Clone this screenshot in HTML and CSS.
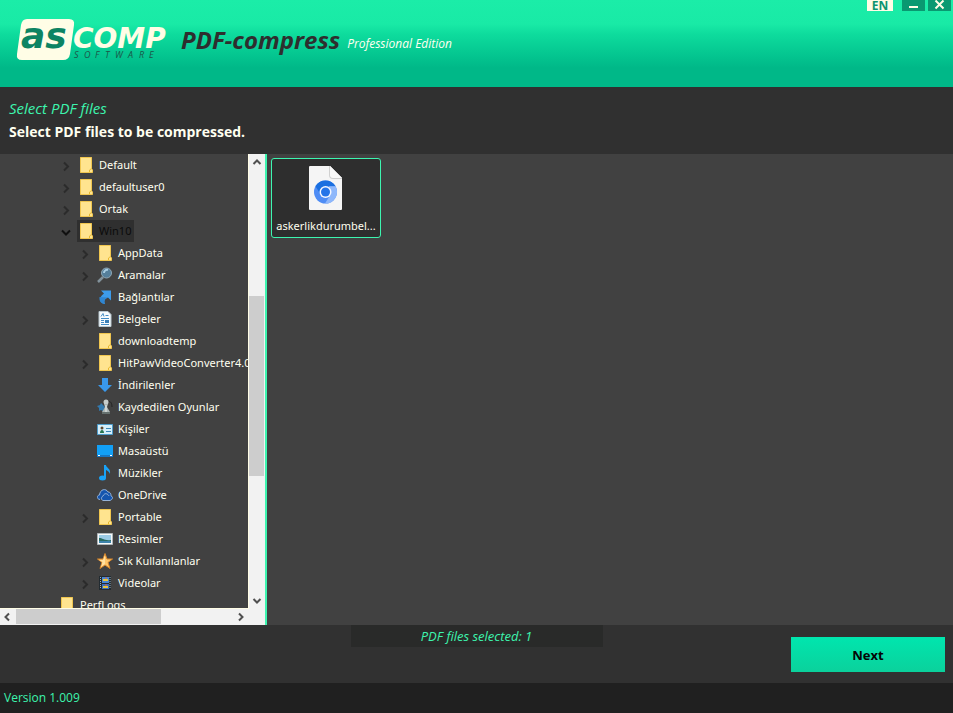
FILE: index.html
```html
<!DOCTYPE html>
<html lang="en">
<head>
<meta charset="utf-8">
<title>PDF-compress</title>
<link rel="stylesheet" href="styles.css">
</head>
<body>
<svg class="defs" aria-hidden="true">
  <symbol id="right" viewBox="0 0 16 16"><path d="M6 4.500l4 4-4 4" fill="none" stroke="currentColor" stroke-width="2"/></symbol>
  <symbol id="down" viewBox="0 0 16 16"><path d="M4 6.500l4 4 4-4" fill="none" stroke="currentColor" stroke-width="2"/></symbol>
  <symbol id="folder" viewBox="0 0 16 16"><path d="M2 .5h12v12h.5v3H2z" fill="#ffe48f"/><path d="M2.500 .5h11v11.500l1 1v2.500h-12z" fill="none" stroke="#f0c64f"/><path d="M11.500 15v-2l2-1.500" fill="none" stroke="#e8b92f"/></symbol>
  <symbol id="search" viewBox="0 0 16 16"><path d="M1 15l5-5" stroke="#83929b" stroke-width="2.500"/><circle cx="9.500" cy="6" r="5" fill="#557f9b" stroke="#8fa7b5"/><path d="M7 6a3 3 0 0 1 4-3" fill="none" stroke="#a9cde2" stroke-width="2"/></symbol>
  <symbol id="link" viewBox="0 0 16 16"><path d="M4 1.500h10v10l-3-3c-3 1-4.500 3-3 6.500-5-1-7.500-6-1-10.500z" fill="#3d9bea"/><path d="M2.500 8c-.5 4 1.500 7 5.500 7-1.500-3 0-5.500 3-6.500z" fill="#2f86d2"/></symbol>
  <symbol id="doc" viewBox="0 0 16 16"><path d="M2 .5h9l3 3v12H2z" fill="#f7fbfd" stroke="#b9c8d0"/><path d="M4 5.500l2-3 1 3M8.500 4.500h3M4 7.500h8M4 9.500h3M4 11.500h3M4 13.500h8" fill="none" stroke="#438cc5"/><path d="M8 9h4v3H8z" fill="#397eb6"/></symbol>
  <symbol id="download" viewBox="0 0 16 16"><path d="M5 1h6v7h4l-7 7-7-7h4z" fill="#3998ec"/></symbol>
  <symbol id="game" viewBox="0 0 16 16"><path d="M10 3c4-2 5 2 5 5" fill="none" stroke="#222"/><path d="M0 7l3-1 1-2 2 2 2 2-2 4-2-1-2 1 0-3z" fill="#327ab0"/><circle cx="9" cy="3" r="2.500" fill="#c6cdcc"/><path d="M7 5h4l-1 3 3 5v2H5v-2l3-5z" fill="#adb7b7"/><path d="M9 6v7" stroke="#edf0ef"/><path d="M5 14h8" stroke="#65706e" stroke-width="2"/></symbol>
  <symbol id="contact" viewBox="0 0 16 16"><path d="M.5 3.500h15v10H.5z" fill="#d6effa" stroke="#4e9cca"/><circle cx="5" cy="7" r="1.500" fill="#60482e"/><path d="M3 12c0-4 4-4 4 0z" fill="#277650"/><path d="M9 7.500h5M9 10.500h5" stroke="#3c88b7"/></symbol>
  <symbol id="desktop" viewBox="0 0 16 16"><path d="M0 2h16v12H0z" fill="#12a0f6"/><path d="M0 12h16v2H0z" fill="#1677c3"/><path d="M1 12.500h2M13 12.500h2" stroke="#fff"/></symbol>
  <symbol id="music" viewBox="0 0 16 16"><ellipse cx="5.500" cy="13" rx="3.500" ry="2.500" fill="#18a3f8"/><path d="M7 0h2c0 3 5 3 4 9-1-3-4-4-4-4v8H7z" fill="#18a3f8"/></symbol>
  <symbol id="cloud" viewBox="0 0 16 16"><path d="M3 12.500C-1 12 0 8 2.500 8 3 2 9 1 11 5c3 0 3 3 3 4 3 1 1 4-1 4.500H6C4 13 4 10 6 9c2-4 5-2 6 0" fill="#1455ae" stroke="#96b3d8"/></symbol>
  <symbol id="photo" viewBox="0 0 16 16"><path d="M.5 2.500h15v11H.5z" fill="#f7f9f9" stroke="#aeb5b8"/><path d="M2 4h12v8H2z" fill="#9bcbe6"/><path d="M2 7c4 0 5 3 12 2v1H2z" fill="#286b62"/><path d="M2 10h12v2H2z" fill="#3d83ac"/></symbol>
  <symbol id="star" viewBox="0 0 16 16"><path d="M8 .5l2 5.500h5.500L11 9.500l2 6L8 12l-5 3.500 2-6L.5 6H6z" fill="#ffc66b" stroke="#d8862b"/><path d="M8 2v9l-4 3 1.500-5L2 7h4z" fill="#ffe0a0"/></symbol>
  <symbol id="video" viewBox="0 0 16 16"><path d="M2 1h12v14H2z" fill="#222b31"/><path d="M5 2h7v6H5z" fill="#4687d4"/><path d="M5 9h7v5H5z" fill="#386fba"/><path d="M6 5h5M6 12h5" stroke="#e4c640" stroke-width="2"/><path d="M8 3h2M8 10h2" stroke="#db6147"/><path d="M3.500 2v12M13 2v12" stroke="#9bb0bd" stroke-dasharray="1 1"/></symbol>
</svg>

<div class="app">
  <header class="banner">
    <svg class="logo" viewBox="0 0 160 44" role="img" aria-label="ASCOMP Software">
      <path d="M11 1h42q6 0 5 6l-4 29q-1 6-7 6H6q-6 0-5-6L5 7q1-6 6-6z" fill="#fffde6"/>
      <text x="5" y="30" class="logo-as">as</text>
      <text x="57" y="30" class="logo-comp">COMP</text>
      <text y="40" class="logo-soft"><tspan x="58">S</tspan><tspan x="68">O</tspan><tspan x="79">F</tspan><tspan x="89">T</tspan><tspan x="99">W</tspan><tspan x="112">A</tspan><tspan x="123">R</tspan><tspan x="133">E</tspan></text>
    </svg>
    <h1 class="product">PDF-compress</h1>
    <span class="edition">Professional Edition</span>
    <div class="window-buttons">
      <button class="lang">EN</button>
      <button class="win" aria-label="Minimize"><svg viewBox="0 0 23 11"><path d="M7 7h9" stroke="#fffde6" stroke-width="2"/></svg></button>
      <button class="win close" aria-label="Close"><svg viewBox="0 0 23 11"><path d="M7.500 .5l8 8M15.500 .5l-8 8" stroke="#fffde6" stroke-width="2"/></svg></button>
    </div>
  </header>

  <section class="intro">
    <h2>Select PDF files</h2>
    <p>Select PDF files to be compressed.</p>
  </section>

  <main class="browser">
    <nav class="side" aria-label="Folders">
      <div class="tree-area">
        <ul class="tree">
          <li class="level1"><svg class="arrow"><use href="#right"/></svg><span class="node"><svg><use href="#folder"/></svg>Default</span></li>
          <li class="level1"><svg class="arrow"><use href="#right"/></svg><span class="node"><svg><use href="#folder"/></svg>defaultuser0</span></li>
          <li class="level1"><svg class="arrow"><use href="#right"/></svg><span class="node"><svg><use href="#folder"/></svg>Ortak</span></li>
          <li class="level1"><svg class="arrow open"><use href="#down"/></svg><span class="node selected"><svg><use href="#folder"/></svg>Win10</span></li>
          <li class="level2"><svg class="arrow"><use href="#right"/></svg><span class="node"><svg><use href="#folder"/></svg>AppData</span></li>
          <li class="level2"><svg class="arrow"><use href="#right"/></svg><span class="node"><svg><use href="#search"/></svg>Aramalar</span></li>
          <li class="level2"><span class="arrow"></span><span class="node"><svg><use href="#link"/></svg>Bağlantılar</span></li>
          <li class="level2"><svg class="arrow"><use href="#right"/></svg><span class="node"><svg><use href="#doc"/></svg>Belgeler</span></li>
          <li class="level2"><span class="arrow"></span><span class="node"><svg><use href="#folder"/></svg>downloadtemp</span></li>
          <li class="level2"><svg class="arrow"><use href="#right"/></svg><span class="node"><svg><use href="#folder"/></svg>HitPawVideoConverter4.0</span></li>
          <li class="level2"><span class="arrow"></span><span class="node"><svg><use href="#download"/></svg>İndirilenler</span></li>
          <li class="level2"><span class="arrow"></span><span class="node"><svg><use href="#game"/></svg>Kaydedilen Oyunlar</span></li>
          <li class="level2"><span class="arrow"></span><span class="node"><svg><use href="#contact"/></svg>Kişiler</span></li>
          <li class="level2"><span class="arrow"></span><span class="node"><svg><use href="#desktop"/></svg>Masaüstü</span></li>
          <li class="level2"><span class="arrow"></span><span class="node"><svg><use href="#music"/></svg>Müzikler</span></li>
          <li class="level2"><span class="arrow"></span><span class="node"><svg><use href="#cloud"/></svg>OneDrive</span></li>
          <li class="level2"><svg class="arrow"><use href="#right"/></svg><span class="node"><svg><use href="#folder"/></svg>Portable</span></li>
          <li class="level2"><span class="arrow"></span><span class="node"><svg><use href="#photo"/></svg>Resimler</span></li>
          <li class="level2"><svg class="arrow"><use href="#right"/></svg><span class="node"><svg><use href="#star"/></svg>Sık Kullanılanlar</span></li>
          <li class="level2"><svg class="arrow"><use href="#right"/></svg><span class="node"><svg><use href="#video"/></svg>Videolar</span></li>
          <li class="level0"><span class="arrow"></span><span class="node"><svg><use href="#folder"/></svg>PerfLogs</span></li>
        </ul>
      </div>
      <div class="vbar">
        <button aria-label="Scroll up"><svg viewBox="0 0 16 16"><path d="M4.500 10L8 6.500l3.500 3.500" fill="none" stroke="currentColor" stroke-width="2"/></svg></button>
        <div class="track"><div class="before"></div><div class="thumb"></div><div class="after"></div></div>
        <button aria-label="Scroll down"><svg viewBox="0 0 16 16"><path d="M4.500 6L8 9.500 11.500 6" fill="none" stroke="currentColor" stroke-width="2"/></svg></button>
      </div>
      <div class="hbar">
        <button aria-label="Scroll left"><svg viewBox="0 0 16 16"><path d="M9 4.500L5.500 8 9 11.500" fill="none" stroke="currentColor" stroke-width="2"/></svg></button>
        <div class="track"><div class="thumb"></div></div>
        <button aria-label="Scroll right"><svg viewBox="0 0 16 16"><path d="M6 4.500L9.500 8 6 11.500" fill="none" stroke="currentColor" stroke-width="2"/></svg></button>
      </div>
    </nav>
    <section class="files" aria-label="Files">
      <button class="file">
        <svg viewBox="0 0 34 44"><path d="M0 1q0-1 1-1h20l12 12v31q0 1-1 1H1q-1 0-1-1z" fill="#f5f5f5"/><path d="M20 0v9q0 4 4 4h9V12L21 0z" fill="#d0d0d0"/><path d="M21 0v9q0 3 3 3h9z" fill="#fafafa"/><circle cx="16.500" cy="26" r="11.500" fill="#4f8df5"/><path d="M6.500 20.300A11.500 11.500 0 0 1 26.500 20.300H16.500L11 27.500z" fill="#1a6fe0"/><path d="M26.500 20.300A11.500 11.500 0 0 1 16 37.500L21.500 28.500 20 20.300z" fill="#8fb8fb"/><circle cx="16.500" cy="26" r="6" fill="#f5f8ff"/><circle cx="16.500" cy="26" r="4.500" fill="#2474e8"/></svg>
        <span>askerlikdurumbel...</span>
      </button>
    </section>
  </main>

  <section class="actions">
    <output class="count">PDF files selected: 1</output>
    <button class="next">Next</button>
  </section>
  <footer class="status">Version 1.009</footer>
</div>
</body>
</html>
```
FILE: styles.css
```css
* { box-sizing: border-box; }
body { margin: 0; background: #222; color: #fffff0; font: 11px/16px "Noto Sans", "Open Sans", sans-serif; }
button { margin: 0; padding: 0; border: 0; font: inherit; color: inherit; }
h1, h2, p, ul { margin: 0; padding: 0; }
svg { display: block; flex: none; }
.defs { position: absolute; width: 0; height: 0; }
.app { min-height: 100vh; display: grid; grid-template-rows: 87px 67px 1fr 58px 30px; }
.banner, .intro, .actions, .status { font-family: "Open Sans", sans-serif; }

.banner { display: flex; align-items: flex-start; padding: 18px 2px 0 16px; background: linear-gradient(#1beda8 0, #19eaa6 24px, #0edc9d 34px, #04c690 55px, #00b888 68px, #00b888 100%); }
.logo { width: 160px; height: 44px; overflow: visible; }
.logo-as, .logo-comp { font: italic bold 28px "DejaVu Sans", sans-serif; }
.logo-as { fill: #0d8463; font-size: 36px; }
.logo-comp { fill: #fffde6; }
.logo-soft { font: italic 9px "Open Sans", sans-serif; fill: #1d5548; }
.product { margin: 6px 0 0 5px; font-size: 24px; line-height: 32px; font-style: italic; color: #2e2e2e; }
.edition { margin: 17px 0 0 7px; font-size: 12px; line-height: 18px; font-style: italic; }
.window-buttons { display: flex; margin: -18px 0 0 auto; }
.lang { width: 26px; height: 11px; margin-right: 9px; background: #fffde6; color: #0d9470; font-size: 12px; font-weight: bold; line-height: 10px; }
.win { width: 23px; height: 11px; background: #0a9971; }
.win svg { width: 23px; height: 11px; }
.close { margin-left: 3px; }

.intro { padding: 11px 9px 0; background: #303030; }
.intro h2 { color: #3df5ae; font-size: 15px; line-height: 20px; font-style: italic; font-weight: 400; }
.intro p { margin-top: 4px; font-size: 14px; line-height: 20px; font-weight: bold; }

.browser { display: grid; grid-template-columns: 267px 1fr; min-height: 0; background: #414141; }
.side { display: grid; grid-template-columns: 1fr 16px; grid-template-rows: 1fr 16px; border-right: 2px solid #3df5b0; background: #f2f2f2; min-height: 0; }
.tree-area { overflow: hidden; contain: size; background: #414141; border-right: 1px solid #fffde6; border-bottom: 1px solid #fffde6; }
.tree { list-style: none; }
.tree li { display: flex; height: 22px; white-space: nowrap; }
.level0 { padding-left: 39px; }
.level1 { padding-left: 58px; }
.level2 { padding-left: 77px; }
.arrow { width: 16px; height: 16px; margin: 4px 3px 0 0; color: #2b2b2b; flex: none; }
.open { color: #101010; }
.node { display: flex; align-items: center; padding: 0 3px 0 1px; }
.node svg { width: 16px; height: 16px; margin-right: 5px; }
.selected { background: #2f2f2f; color: #0b0b0b; }
.vbar { display: flex; flex-direction: column; }
.vbar button, .hbar button { width: 16px; height: 16px; background: none; color: #505050; }
.side button svg { width: 16px; height: 16px; }
.vbar .track { flex: 1; display: flex; flex-direction: column; }
.before { flex: 126; }
.vbar .thumb { flex: 180; width: 15px; background: #cdcdcd; }
.after { flex: 117; }
.hbar { display: flex; }
.hbar .track { flex: 1; }
.hbar .thumb { width: 67%; height: 15px; background: #cdcdcd; }

.files { padding: 4px; }
.file { display: flex; flex-direction: column; align-items: center; width: 110px; height: 80px; padding-top: 7px; background: #2e2e2e; border: 1px solid #3df5b0; border-radius: 3px; }
.file svg { width: 34px; height: 44px; margin-bottom: 8px; }

.actions { display: grid; grid-template-columns: 1fr 252px 1fr; align-items: start; background: #313131; }
.count { grid-column: 2; height: 22px; text-align: center; font-size: 13px; line-height: 22px; font-style: italic; color: #3df5ae; background: #292a29; }
.next { justify-self: end; width: 154px; height: 35px; margin: 12px 8px 0 0; background: linear-gradient(#00e6ae, #0bd19c); color: #050505; font-size: 13px; font-weight: bold; }
.status { padding: 7px 4px; background: #202020; color: #3df5ae; font-size: 12px; }
```
